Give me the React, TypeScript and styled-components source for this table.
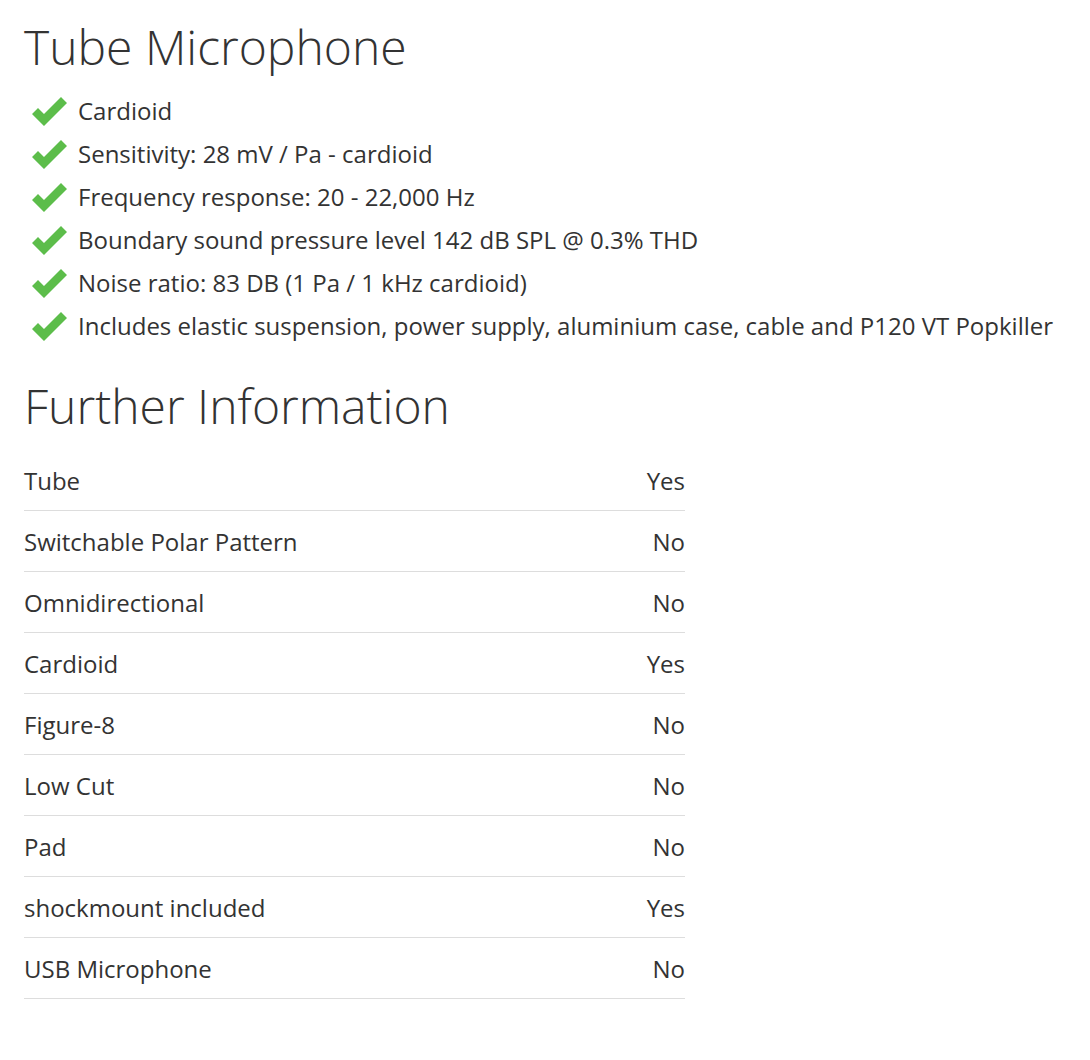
import React from "react";
import styled, { createGlobalStyle } from "styled-components";

const Global = createGlobalStyle`
  body {
    margin: 0;
    background: #fff;
    font-family: "Open Sans", sans-serif;
    color: #333;
  }
`;

const Page = styled.div`
  padding: 15px 24px 40px 24px;
`;

const Title = styled.h1`
  font-family: "Open Sans", sans-serif;
  font-weight: 300;
  font-size: 48px;
  line-height: 64px;
  margin: 0 0 10px 0;
  color: #333;
`;

const List = styled.ul`
  list-style: none;
  margin: 0;
  padding: 0 0 0 8px;
`;

const Item = styled.li`
  display: flex;
  align-items: center;
  gap: 11px;
  height: 43px;
  font-size: 24px;
  color: #333;
`;

const CheckSvg = styled.svg`
  width: 35px;
  height: 30px;
  flex: none;
  fill: #5cbd4a;
`;

const Check = () => (
  <CheckSvg viewBox="0 0 35 30">
    <polygon points="0,18 6,12 12,18 29,1 35,7 12,30" />
  </CheckSvg>
);

const Table = styled.div`
  width: 661px;
  display: flex;
  flex-direction: column;
`;

const Row = styled.div`
  display: flex;
  justify-content: space-between;
  align-items: center;
  height: 60px;
  border-bottom: 1px solid #ddd;
  font-size: 24px;
  color: #333;
`;

const Section = styled.h2`
  font-family: "Open Sans", sans-serif;
  font-weight: 300;
  font-size: 48px;
  line-height: 64px;
  margin: 27px 0 12px 0;
  color: #333;
`;

const features = [
  "Cardioid",
  "Sensitivity: 28 mV / Pa - cardioid",
  "Frequency response: 20 - 22,000 Hz",
  "Boundary sound pressure level 142 dB SPL @ 0.3% THD",
  "Noise ratio: 83 DB (1 Pa / 1 kHz cardioid)",
  "Includes elastic suspension, power supply, aluminium case, cable and P120 VT Popkiller",
];

const info: [string, string][] = [
  ["Tube", "Yes"],
  ["Switchable Polar Pattern", "No"],
  ["Omnidirectional", "No"],
  ["Cardioid", "Yes"],
  ["Figure-8", "No"],
  ["Low Cut", "No"],
  ["Pad", "No"],
  ["shockmount included", "Yes"],
  ["USB Microphone", "No"],
];

export default function App() {
  return (
    <>
      <Global />
      <Page>
        <Title>Tube Microphone</Title>
        <List>
          {features.map((f) => (
            <Item key={f}>
              <Check />
              <span>{f}</span>
            </Item>
          ))}
        </List>
        <Section>Further Information</Section>
        <Table>
          {info.map(([k, v]) => (
            <Row key={k}>
              <span>{k}</span>
              <span>{v}</span>
            </Row>
          ))}
        </Table>
      </Page>
    </>
  );
}
